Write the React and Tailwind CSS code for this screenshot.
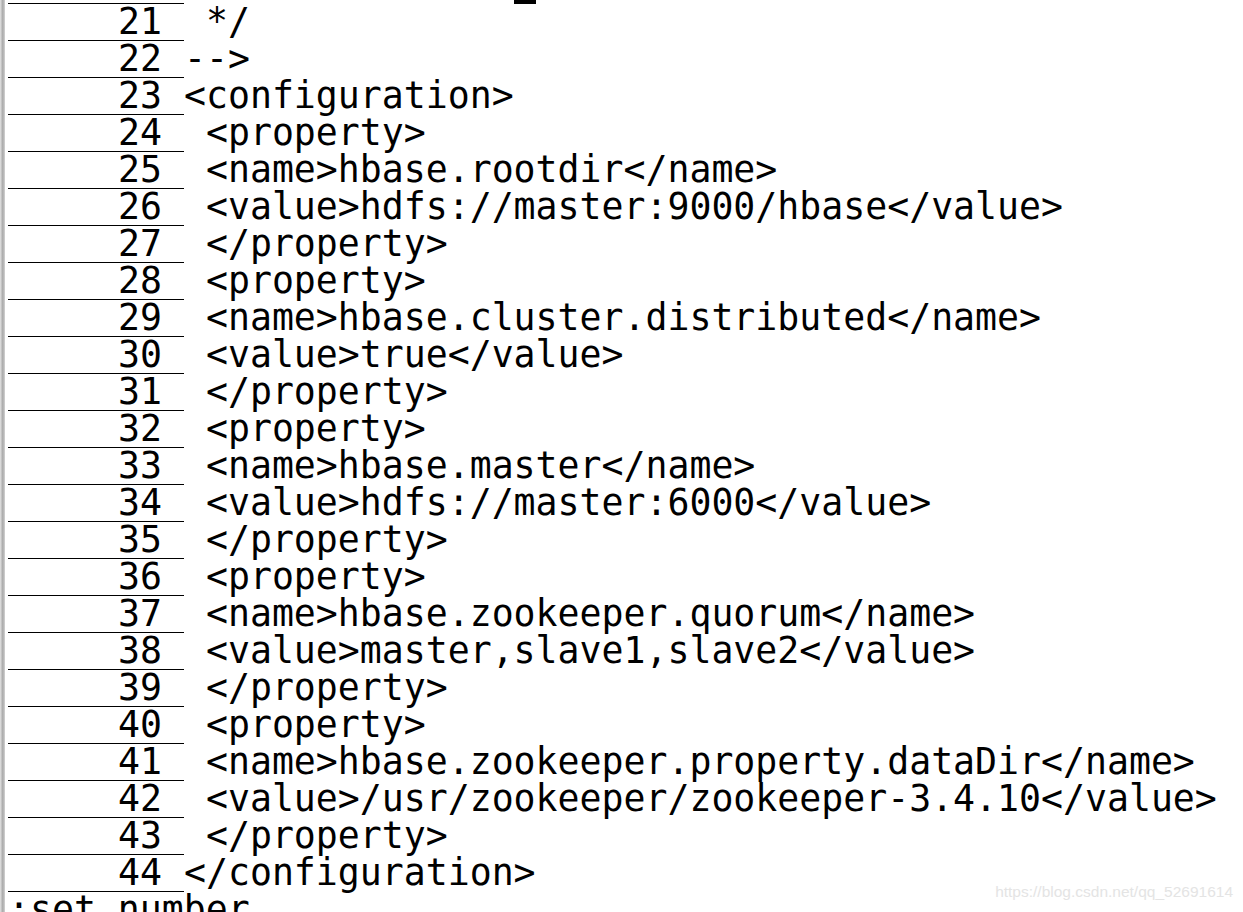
const lines = [
  [21, ' */'],
  [22, '-->'],
  [23, '<configuration>'],
  [24, ' <property>'],
  [25, ' <name>hbase.rootdir</name>'],
  [26, ' <value>hdfs://master:9000/hbase</value>'],
  [27, ' </property>'],
  [28, ' <property>'],
  [29, ' <name>hbase.cluster.distributed</name>'],
  [30, ' <value>true</value>'],
  [31, ' </property>'],
  [32, ' <property>'],
  [33, ' <name>hbase.master</name>'],
  [34, ' <value>hdfs://master:6000</value>'],
  [35, ' </property>'],
  [36, ' <property>'],
  [37, ' <name>hbase.zookeeper.quorum</name>'],
  [38, ' <value>master,slave1,slave2</value>'],
  [39, ' </property>'],
  [40, ' <property>'],
  [41, ' <name>hbase.zookeeper.property.dataDir</name>'],
  [42, ' <value>/usr/zookeeper/zookeeper-3.4.10</value>'],
  [43, ' </property>'],
  [44, '</configuration>'],
];

const App = () => {
  return (
    <div className="relative h-[912px] w-[1243px] overflow-hidden bg-white flex text-black font-['DejaVu_Sans_Mono',monospace] text-[36.5px] leading-[36px]">
      {/* window edge */}
      <div className="w-[5px] shrink-0 bg-[linear-gradient(to_right,#e4e4e4,#a8a8a8_55%,#d4d4d4)]" />

      <div className="flex-1 pl-[3px]">
        {/* tail of line 20 with the cursor */}
        <div className="flex h-[4px]">
          <div className="w-[176px] h-[4px] border-b border-black" />
          <div className="w-[330px]" />
          <div className="w-[22px] h-[4px] bg-black" />
        </div>

        {lines.map(([num, text]) => (
          <div key={num} className="flex h-[37px]">
            <div className="w-[176px] h-[37px] shrink-0 border-b border-black text-right pr-[22px]">{num}</div>
            <div className="whitespace-pre">{text}</div>
          </div>
        ))}

        {/* command line */}
        <div className="h-[37px] whitespace-pre">:set number</div>
      </div>

      {/* watermark */}
      <div className="absolute right-[10px] top-[882px] font-['Liberation_Sans',Arial,sans-serif] text-[15.5px] leading-[19px] text-[#e4e4e4]">
        https://blog.csdn.net/qq_52691614
      </div>
    </div>
  );
};

export default App;
